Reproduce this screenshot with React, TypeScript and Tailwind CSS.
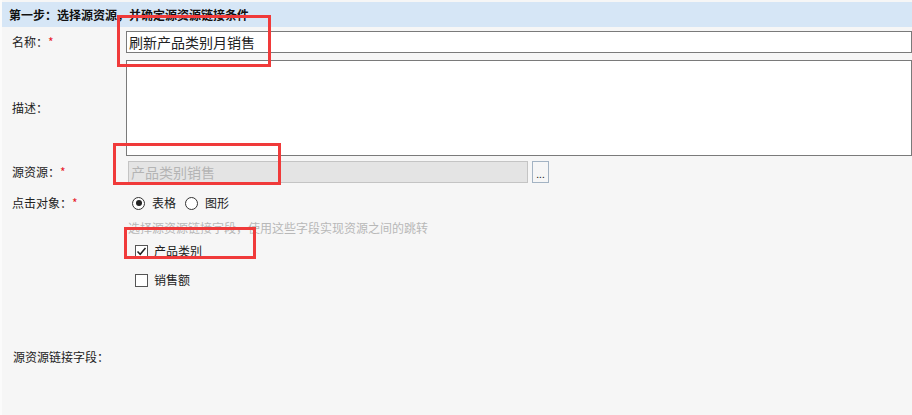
import React from "react";

const Req = () => <span className="text-[#e8202a]">*</span>;

function Radio({ checked, label }: { checked?: boolean; label: string }) {
  return (
    <div className="flex items-center">
      <span className="w-[13px] h-[13px] rounded-full border border-[#333] bg-white flex items-center justify-center">
        {checked && <span className="w-[6px] h-[6px] rounded-full bg-[#222]" />}
      </span>
      <span className="ml-[7px] text-[12px] text-[#222]">{label}</span>
    </div>
  );
}

function Check({ checked, label }: { checked?: boolean; label: string }) {
  return (
    <div className="flex items-center h-[16px] pl-[133px]">
      <span className="w-[13px] h-[13px] border border-[#555] bg-white flex items-center justify-center">
        {checked && (
          <svg width="11" height="11" viewBox="0 0 11 11">
            <path d="M1.5 5.5 L4.2 8.3 L9.5 2" fill="none" stroke="#222" strokeWidth="1.5" />
          </svg>
        )}
      </span>
      <span className="ml-[6px] text-[12px] text-[#222]">{label}</span>
    </div>
  );
}

export default function App() {
  return (
    <div className="relative w-[912px] h-[415px] overflow-hidden bg-[#f6f6f6] border-l-[2px] border-[#fbfbfb] pt-[2px] font-['Microsoft_YaHei','Noto_Sans_CJK_SC',sans-serif] text-[#222]">
      <div className="h-[25px] bg-[#d6e6f6] pl-[7px] flex items-center text-[12px] font-bold text-[#111]">
        第一步：选择源资源，并确定源资源链接条件
      </div>

      <div className="flex items-center mt-[4px] h-[22px]">
        <div className="w-[126px] pl-[10px] text-[12px]">
          名称：<Req />
        </div>
        <div className="w-[800px] h-[22px] border border-[#7a7a7a] bg-white flex items-center pl-[2px] text-[14px] text-[#222]">
          刷新产品类别月销售
        </div>
      </div>

      <div className="flex items-center mt-[7px] h-[96px]">
        <div className="w-[126px] pl-[10px] text-[12px]">描述：</div>
        <div className="w-[800px] h-[96px] border border-[#7a7a7a] bg-white" />
      </div>

      <div className="flex items-center mt-[5px] h-[22px]">
        <div className="w-[126px] pl-[10px] text-[12px]">
          源资源：<Req />
        </div>
        <div className="w-[400px] h-[22px] border border-[#c4c4c4] bg-[#e4e4e4] flex items-center pl-[2px] text-[14px] text-[#b4b4b4]">
          产品类别销售
        </div>
        <div className="ml-[4px] w-[17px] h-[22px] border border-[#a3b3c3] bg-[#f6f6f6] flex items-end justify-center pb-[3px] text-[10px] leading-none text-[#222]">
          ...
        </div>
      </div>

      <div className="flex items-center mt-[10px] h-[20px]">
        <div className="w-[126px] pl-[10px] text-[12px]">
          点击对象：<Req />
        </div>
        <div className="flex items-center gap-[9px] pl-[4px]">
          <Radio checked label="表格" />
          <Radio label="图形" />
        </div>
      </div>

      <div className="mt-[7px] h-[16px] pl-[126px] text-[12px] leading-[16px] text-[#b8b8b8]">
        选择源资源链接字段，使用这些字段实现资源之间的跳转
      </div>

      <div className="mt-[7px]">
        <Check checked label="产品类别" />
      </div>
      <div className="mt-[13px]">
        <Check label="销售额" />
      </div>

      <div className="mt-[61px] h-[16px] pl-[11px] text-[12px] leading-[16px]">源资源链接字段：</div>

      <div className="absolute left-[115px] top-[15px] w-[154px] h-[52px] border-[3px] border-[#f03a3a]" />
      <div className="absolute left-[111px] top-[143px] w-[168px] h-[42px] border-[3px] border-[#f03a3a]" />
      <div className="absolute left-[122px] top-[227px] w-[132px] h-[32px] border-[3px] border-[#f03a3a]" />
    </div>
  );
}
